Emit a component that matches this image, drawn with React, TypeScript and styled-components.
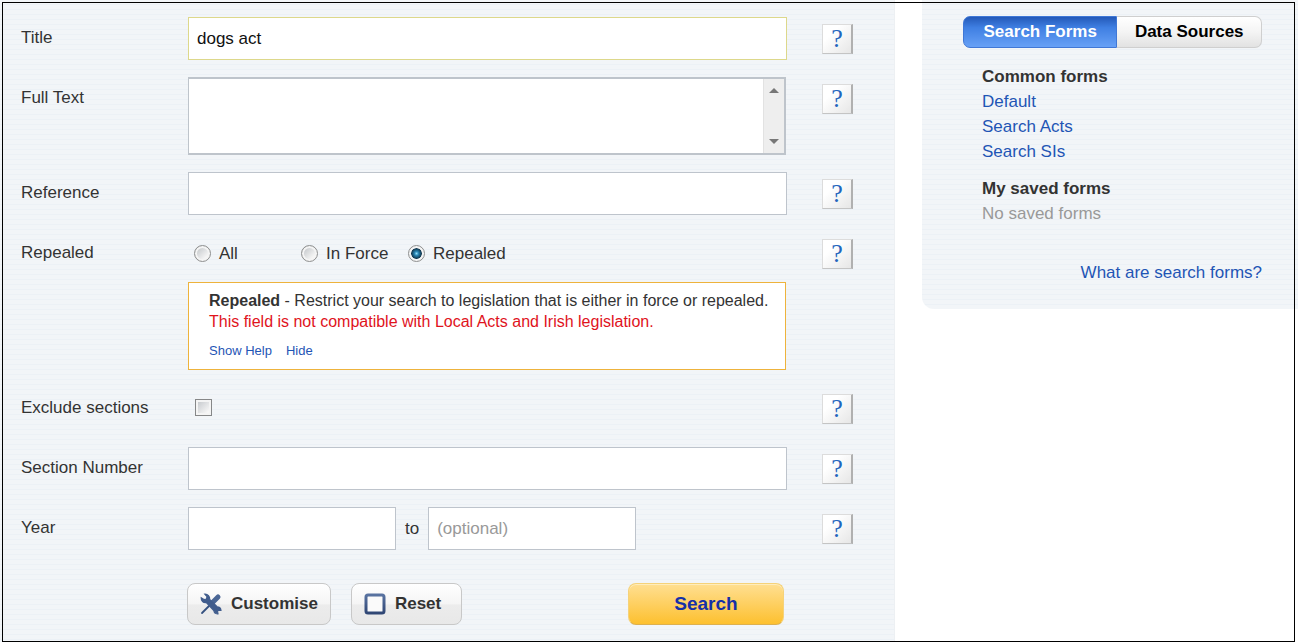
import React from "react";
import styled, { createGlobalStyle, css } from "styled-components";

const GlobalStyle = createGlobalStyle`
  *, *::before, *::after { box-sizing: border-box; }
  body {
    margin: 0;
    background: #fff;
    color: #333;
    font-family: "Liberation Sans", Arial, sans-serif;
    font-size: 17px;
  }
  input, textarea, button { font-family: inherit; }
`;

const stripes = css`
  background: repeating-linear-gradient(
    to bottom,
    #f2f5f8 0,
    #f2f5f8 4px,
    #ecf1f6 4px,
    #ecf1f6 5px
  );
`;

const Page = styled.div`
  position: relative;
  display: grid;
  grid-template-columns: minmax(0, 895fr) minmax(0, 376fr);
  column-gap: 27px;
  align-items: start;
  padding-bottom: 2px;
`;

const Frame = styled.div`
  position: absolute;
  inset: 2px 3px 2px 2px;
  border: 1px solid #000;
  pointer-events: none;
`;

const SearchForm = styled.form`
  ${stripes}
  display: flex;
  flex-direction: column;
  gap: 17px;
  padding: 17px 41px 17px 21px;
  border-right: 1px solid #edf0f3;
`;

const Row = styled.div`
  display: grid;
  grid-template-columns: 132px minmax(0, 1fr) 31px;
  column-gap: 35px;
  align-items: start;
  min-height: 43px;
`;

const Label = styled.label`
  line-height: 41px;
  white-space: nowrap;
`;

const TextInput = styled.input<{ $active?: boolean; $short?: boolean }>`
  width: ${(p) => (p.$short ? "208px" : "100%")};
  height: 43px;
  padding: 0 8px;
  border: 1px solid ${(p) => (p.$active ? "#ddd88b" : "#bec4cc")};
  border-radius: 0;
  background: #fff;
  color: #111;
  font-size: 17px;
  outline: none;
  &::placeholder { color: #999; opacity: 1; }
`;

const AreaBox = styled.div`
  display: flex;
  height: 78px;
  margin-right: 1px;
  border: 2px solid #bec4cb;
  border-left-width: 1px;
  background: #fff;
`;

const Area = styled.textarea`
  flex: 1;
  min-width: 0;
  padding: 8px;
  border: 0;
  background: transparent;
  font-size: 17px;
  resize: none;
  outline: none;
  overflow: hidden;
`;

const ScrollTrack = styled.div`
  display: flex;
  flex-direction: column;
  justify-content: space-between;
  width: 21px;
  padding: 8px 0;
  border-left: 1px solid #e2e2e2;
  background: #eee;
`;

const ScrollButton = styled.button`
  display: flex;
  justify-content: center;
  padding: 0;
  border: 0;
  background: none;
`;

const HelpButton = styled.button`
  height: 30px;
  margin-top: 7px;
  padding: 0;
  border: 1px solid #dcdcdc;
  border-right: 2px solid #b0b0b0;
  border-bottom-color: #c4c4c4;
  background: linear-gradient(135deg, #fff 30%, #e6e6e6);
  color: #2265bd;
  font-family: "Liberation Serif", "Times New Roman", serif;
  font-size: 26px;
  line-height: 28px;
`;

const Options = styled.div`
  display: grid;
  grid-template-columns: repeat(3, 107px);
  height: 43px;
  margin-bottom: 7px;
  padding-left: 6px;
`;

const Option = styled.label`
  display: flex;
  align-items: center;
  gap: 8px;
  white-space: nowrap;
`;

const Radio = styled.input`
  appearance: none;
  flex: none;
  width: 17px;
  height: 17px;
  margin: 0;
  border: 1px solid #8e8f8f;
  border-radius: 50%;
  background: linear-gradient(135deg, #c9cccf 20%, #f6f6f6 75%);
  box-shadow: inset 0 0 0 2px #f4f4f4;
  &:checked {
    background: radial-gradient(circle at 50% 50%, #8fdcf8 0, #2a86b4 2px, #12384f 5px, #f4f4f4 6px);
  }
`;

const Notice = styled.div`
  padding: 7px 8px 9px 20px;
  margin-right: 1px;
  border: 1px solid #eeb33c;
  background: #fff;
  font-size: 16px;
  line-height: 21px;
`;

const NoticeText = styled.p<{ $warning?: boolean }>`
  margin: 0;
  color: ${(p) => (p.$warning ? "#e0131c" : "#333")};
`;

const NoticeLinks = styled.div`
  display: flex;
  gap: 14px;
  margin-top: 10px;
  font-size: 13px;
  line-height: 18px;
`;

const Link = styled.a`
  color: #1f55b5;
  text-decoration: none;
`;

const CheckCell = styled.div`
  display: flex;
  align-items: center;
  height: 41px;
  padding-left: 7px;
`;

const Checkbox = styled.input`
  appearance: none;
  width: 17px;
  height: 17px;
  margin: 0;
  border: 1px solid #868788;
  background: linear-gradient(135deg, #c6c9cd 10%, #f6f6f6 80%);
  box-shadow: inset 0 0 0 2px #f4f4f4;
`;

const Range = styled.div`
  display: flex;
  align-items: center;
  gap: 9px;
`;

const Actions = styled.div`
  display: flex;
  gap: 20px;
  margin: 16px 69px 0 166px;
`;

const Button = styled.button`
  display: flex;
  align-items: center;
  gap: 9px;
  height: 42px;
  padding: 0 12px;
  border: 1px solid #c8c8c8;
  border-radius: 8px;
  background: linear-gradient(#fff 0, #f5f5f5 50%, #ececec 52%, #e8e8e8);
  color: #333;
  font-size: 17px;
  font-weight: bold;
`;

const ResetButton = styled(Button)`
  padding: 0 20px 0 12px;
`;

const SearchButton = styled(Button)`
  justify-content: center;
  width: 156px;
  margin-left: auto;
  border-color: #f5d27a;
  border-bottom-color: #dcb050;
  background: linear-gradient(#ffdf92, #fdc02f);
  box-shadow: inset 0 1px 0 #ffedbd;
  color: #1530a8;
  font-size: 19px;
`;

const Sidebar = styled.aside`
  ${stripes}
  display: flex;
  flex-direction: column;
  padding: 16px 36px 24px 41px;
  border-bottom-left-radius: 12px;
`;

const Tabs = styled.div`
  display: flex;
  height: 32px;
  margin-bottom: 16px;
`;

const Tab = styled.button<{ $selected?: boolean }>`
  flex: ${(p) => (p.$selected ? "154 1 0" : "145 1 0")};
  padding: 0 0 1px;
  border: 1px solid ${(p) => (p.$selected ? "#3f77d6" : "#cfcfcf")};
  border-left-width: ${(p) => (p.$selected ? "1px" : "0")};
  border-radius: ${(p) => (p.$selected ? "7px 0 0 7px" : "0 7px 7px 0")};
  background: ${(p) =>
    p.$selected
      ? "linear-gradient(#2459b8, #3f7fe2 35%, #66a0f6)"
      : "linear-gradient(#fff, #f4f4f4 50%, #e2e2e2)"};
  color: ${(p) => (p.$selected ? "#fff" : "#000")};
  font-size: 17px;
  font-weight: bold;
  white-space: nowrap;
`;

const FormGroup = styled.section`
  margin: 0 0 12px 19px;
  line-height: 25px;
`;

const GroupTitle = styled.h2`
  margin: 0;
  font-size: 17px;
  line-height: 25px;
`;

const List = styled.ul`
  margin: 0;
  padding: 0;
  list-style: none;
`;

const Muted = styled.p`
  margin: 0;
  color: #999;
`;

const SidebarFooter = styled.div`
  margin-top: 22px;
  line-height: 25px;
  text-align: right;
`;

const Arrow = ({ down }: { down?: boolean }) => (
  <svg width="10" height="6" viewBox="0 0 10 6" aria-hidden="true">
    <path d={down ? "M0 0h10L5 5z" : "M0 6h10L5 1z"} fill="#777" />
  </svg>
);

const ToolsIcon = () => (
  <svg width="22" height="22" viewBox="0 0 22 22" aria-hidden="true">
    <path d="M2 20 10 12" stroke="#34507f" strokeWidth="1.8" strokeLinecap="round" />
    <path d="M11.500 10.500 18 4" stroke="#4a6695" strokeWidth="5" strokeLinecap="round" />
    <path
      d="M4.800 1.200 7 3.700 6.500 6 4 6.500 1.200 4.800C1 7.800 3.300 10 6.300 9.500L13.800 17.500c.300 2 2 3.500 4.200 3.300l-.500-2.500 1.200-1.200 2.300.300c0-2.300-1.700-3.700-3.900-3.600L9.700 6.500C10 3.500 7.800 1 4.800 1.200z"
      fill="#415d8d"
      stroke="#415d8d"
      strokeWidth="1.2"
    />
  </svg>
);

const ResetIcon = () => (
  <svg width="22" height="22" viewBox="0 0 22 22" aria-hidden="true">
    <defs>
      <linearGradient id="resetStroke" x1="0" y1="0" x2="0" y2="1">
        <stop offset="0" stopColor="#5872a0" />
        <stop offset="1" stopColor="#304775" />
      </linearGradient>
    </defs>
    <rect x="2" y="2" width="18" height="18" rx="2" fill="#fafafa" stroke="url(#resetStroke)" strokeWidth="3" />
  </svg>
);

const Help = ({ topic }: { topic: string }) => (
  <HelpButton type="button" aria-label={`Help: ${topic}`}>?</HelpButton>
);

export default function App() {
  return (
    <>
      <GlobalStyle />
      <Page>
        <SearchForm onSubmit={(e) => e.preventDefault()}>
          <Row>
            <Label htmlFor="title">Title</Label>
            <TextInput id="title" $active defaultValue="dogs act" />
            <Help topic="Title" />
          </Row>
          <Row>
            <Label htmlFor="fulltext">Full Text</Label>
            <AreaBox>
              <Area id="fulltext" />
              <ScrollTrack>
                <ScrollButton type="button" aria-label="Scroll up"><Arrow /></ScrollButton>
                <ScrollButton type="button" aria-label="Scroll down"><Arrow down /></ScrollButton>
              </ScrollTrack>
            </AreaBox>
            <Help topic="Full Text" />
          </Row>
          <Row>
            <Label htmlFor="reference">Reference</Label>
            <TextInput id="reference" />
            <Help topic="Reference" />
          </Row>
          <Row role="radiogroup" aria-labelledby="repealed-label">
            <Label as="span" id="repealed-label">Repealed</Label>
            <div>
              <Options>
                <Option><Radio type="radio" name="repealed" value="all" />All</Option>
                <Option><Radio type="radio" name="repealed" value="inforce" />In Force</Option>
                <Option><Radio type="radio" name="repealed" value="repealed" defaultChecked />Repealed</Option>
              </Options>
              <Notice>
                <NoticeText>
                  <b>Repealed</b> - Restrict your search to legislation that is either in force or repealed.
                </NoticeText>
                <NoticeText $warning>
                  This field is not compatible with Local Acts and Irish legislation.
                </NoticeText>
                <NoticeLinks>
                  <Link href="#help">Show Help</Link>
                  <Link href="#hide">Hide</Link>
                </NoticeLinks>
              </Notice>
            </div>
            <Help topic="Repealed" />
          </Row>
          <Row>
            <Label htmlFor="exclude">Exclude sections</Label>
            <CheckCell><Checkbox id="exclude" type="checkbox" /></CheckCell>
            <Help topic="Exclude sections" />
          </Row>
          <Row>
            <Label htmlFor="section">Section Number</Label>
            <TextInput id="section" />
            <Help topic="Section Number" />
          </Row>
          <Row>
            <Label htmlFor="year">Year</Label>
            <Range>
              <TextInput id="year" $short />
              <label htmlFor="year-to">to</label>
              <TextInput id="year-to" $short placeholder="(optional)" />
            </Range>
            <Help topic="Year" />
          </Row>
          <Actions>
            <Button type="button"><ToolsIcon />Customise</Button>
            <ResetButton type="reset"><ResetIcon />Reset</ResetButton>
            <SearchButton type="submit">Search</SearchButton>
          </Actions>
        </SearchForm>
        <Sidebar>
          <Tabs role="tablist">
            <Tab type="button" role="tab" aria-selected="true" $selected>Search Forms</Tab>
            <Tab type="button" role="tab" aria-selected="false">Data Sources</Tab>
          </Tabs>
          <FormGroup>
            <GroupTitle>Common forms</GroupTitle>
            <List>
              <li><Link href="#default">Default</Link></li>
              <li><Link href="#acts">Search Acts</Link></li>
              <li><Link href="#sis">Search SIs</Link></li>
            </List>
          </FormGroup>
          <FormGroup>
            <GroupTitle>My saved forms</GroupTitle>
            <Muted>No saved forms</Muted>
          </FormGroup>
          <SidebarFooter>
            <Link href="#about">What are search forms?</Link>
          </SidebarFooter>
        </Sidebar>
        <Frame />
      </Page>
    </>
  );
}
